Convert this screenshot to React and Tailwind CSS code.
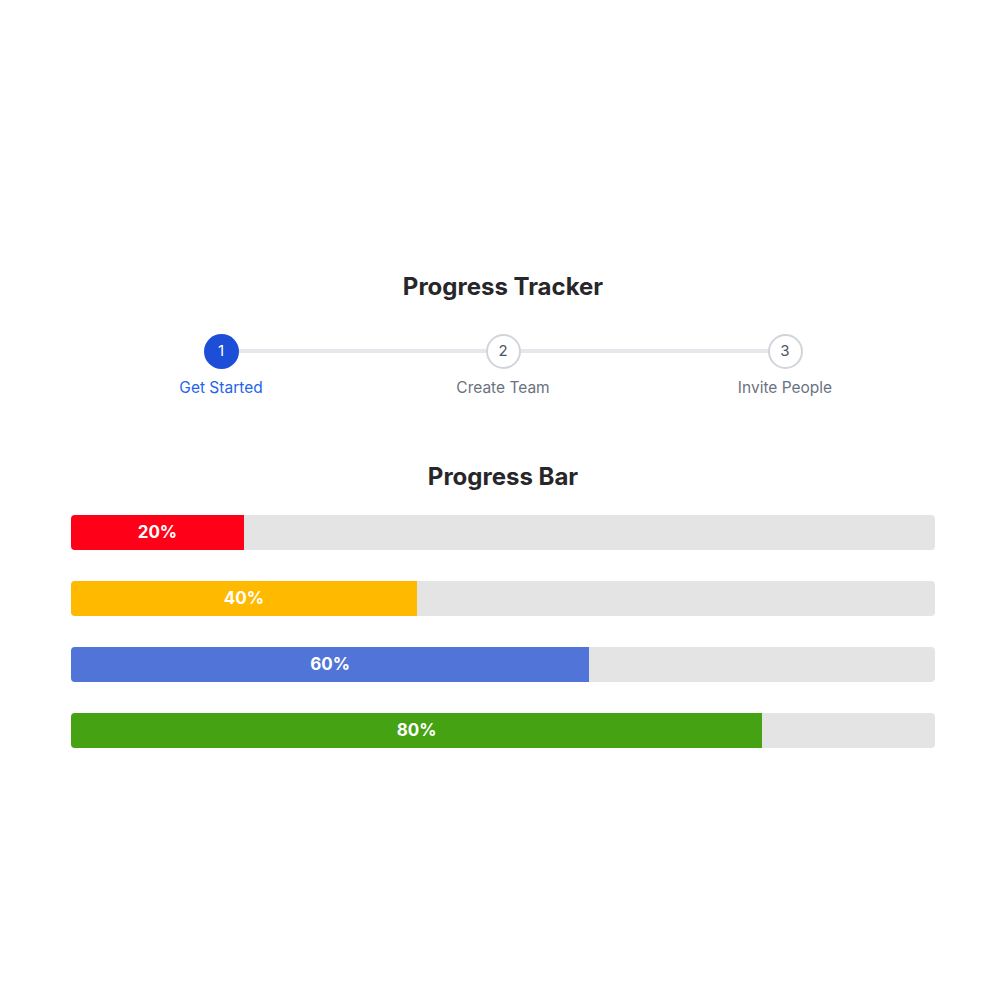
import React from "react";

const steps = [
  { n: 1, label: "Get Started", active: true },
  { n: 2, label: "Create Team" },
  { n: 3, label: "Invite People" },
];

const bars = [
  { v: 20, color: "bg-[#ff0019]" },
  { v: 40, color: "bg-[#ffba00]" },
  { v: 60, color: "bg-[#5074d8]" },
  { v: 80, color: "bg-[#45a212]" },
];

export default function App() {
  return (
    <div className="w-[1000px] h-[1000px] bg-white font-['Inter',sans-serif]">
      <div className="ml-[71px] w-[864px] pt-[271px] flex flex-col">
        <h1 className="text-center text-[24px] leading-[32px] font-bold text-[#27272a]">Progress Tracker</h1>
        <div className="mt-[31px] mx-auto w-[846px] grid grid-cols-3">
          {steps.map((s, i) => (
            <div key={s.n} className="relative flex flex-col items-center">
              {i > 0 && (
                <div className="absolute top-[15px] left-0 right-1/2 h-[4px] bg-[#e5e7eb]" />
              )}
              {i < steps.length - 1 && (
                <div className="absolute top-[15px] left-1/2 right-0 h-[4px] bg-[#e5e7eb]" />
              )}
              <div
                className={
                  s.active
                    ? "relative z-10 w-[35px] h-[35px] rounded-full bg-[#1d4ed8] text-white flex items-center justify-center text-[15px]"
                    : "relative z-10 w-[35px] h-[35px] rounded-full bg-white border-2 border-[#d1d5db] text-[#4b5563] flex items-center justify-center text-[15px]"
                }
              >
                {s.n}
              </div>
              <div
                className={
                  s.active
                    ? "mt-[9px] text-[15.5px] leading-[20px] text-[#2563eb]"
                    : "mt-[9px] text-[15.5px] leading-[20px] text-[#6b7280]"
                }
              >
                {s.label}
              </div>
            </div>
          ))}
        </div>
        <h2 className="mt-[63px] text-center text-[24px] leading-[32px] font-bold text-[#27272a]">Progress Bar</h2>
        <div className="mt-[22px] flex flex-col gap-[31px]">
          {bars.map((b) => (
            <div key={b.v} className="h-[35px] w-full rounded-[4px] bg-[#e4e4e4] overflow-hidden">
              <div
                className={`${b.color} h-full flex items-center justify-center text-white font-bold text-[17px] leading-[20px] pb-[2px]`}
                style={{ width: `${b.v}%` }}
              >
                {b.v}%
              </div>
            </div>
          ))}
        </div>
      </div>
    </div>
  );
}
